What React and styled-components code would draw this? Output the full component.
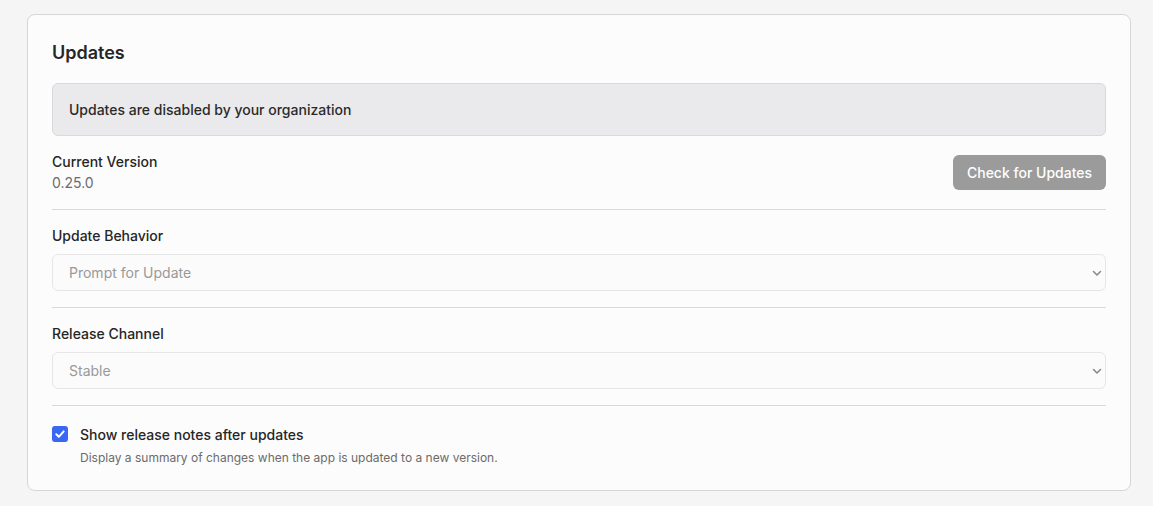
import React from "react";
import styled, { createGlobalStyle } from "styled-components";

const GlobalStyle = createGlobalStyle`
  html, body {
    margin: 0;
    padding: 0;
    background-color: #f5f5f5;
    font-family: Inter, "Noto Sans", "Liberation Sans", sans-serif;
    color: #262626;
  }
  * {
    box-sizing: border-box;
  }
`;

const Page = styled.div`
  padding: 14px 22px 15px 27px;
`;

const Card = styled.div`
  background-color: #fcfcfc;
  border: 1px solid #d6d6d6;
  border-radius: 8px;
  padding: 24px 24px 24px 24px;
`;

const Title = styled.h2`
  margin: 0 0 16px 0;
  font-size: 18px;
  line-height: 28px;
  font-weight: 600;
  color: #262626;
`;

const Notice = styled.div`
  background-color: #eaeaec;
  border: 1px solid #d9d9db;
  border-radius: 6px;
  padding: 16px 16px;
  font-size: 14px;
  line-height: 19px;
  font-weight: 500;
  color: #2a2a2a;
  margin-bottom: 16px;
`;

const Section = styled.div`
  padding: ${({ first }) => (first ? "0 0 16px 0" : "16px 0")};
  border-bottom: ${({ last }) => (last ? "none" : "1px solid #d9d9d9")};
`;

const VersionRow = styled.div`
  display: flex;
  align-items: center;
  justify-content: space-between;
`;

const Label = styled.div`
  font-size: 14px;
  line-height: 20px;
  font-weight: 500;
  color: #262626;
`;

const Value = styled.div`
  font-size: 14px;
  line-height: 21px;
  color: #6b6b6b;
`;

const Button = styled.button`
  width: 153px;
  height: 35px;
  border: none;
  border-radius: 6px;
  background-color: #9b9b9b;
  color: #ffffff;
  font-family: inherit;
  font-size: 14px;
  font-weight: 500;
  cursor: not-allowed;
`;

const SelectWrap = styled.div`
  position: relative;
  margin-top: 8px;
`;

const Select = styled.select`
  appearance: none;
  -webkit-appearance: none;
  width: 100%;
  height: 37px;
  padding: 0 40px 0 16px;
  border: 1px solid #e6e6e6;
  border-radius: 6px;
  background-color: #fbfbfb;
  font-family: inherit;
  font-size: 14px;
  color: #999999;
  opacity: 1;
`;

const Chevron = styled.svg`
  position: absolute;
  right: 3px;
  top: 50%;
  transform: translateY(-50%);
  pointer-events: none;
`;

const CheckRow = styled.div`
  display: flex;
  align-items: flex-start;
  gap: 12px;
  padding-top: 19px;
`;

const CheckBox = styled.div`
  width: 16px;
  height: 16px;
  margin-top: 1px;
  border-radius: 3px;
  background-color: #3a66f4;
  display: flex;
  align-items: center;
  justify-content: center;
  flex-shrink: 0;
`;

const CheckText = styled.div`
  display: flex;
  flex-direction: column;
  gap: 4px;
`;

const Hint = styled.div`
  font-size: 12px;
  line-height: 17px;
  color: #6b6b6b;
`;

function SelectField({ label, value, last }) {
  return (
    <Section last={last}>
      <Label>{label}</Label>
      <SelectWrap>
        <Select disabled value={value} onChange={() => {}}>
          <option value={value}>{value}</option>
        </Select>
        <Chevron width="12" height="12" viewBox="0 0 12 12" fill="none">
          <path d="M2.5 4.5L6 8L9.5 4.5" stroke="#8a8a8a" strokeWidth="1.6" strokeLinecap="round" strokeLinejoin="round" />
        </Chevron>
      </SelectWrap>
    </Section>
  );
}

export default function App() {
  return (
    <Page>
      <GlobalStyle />
      <Card>
        <Title>Updates</Title>
        <Notice>Updates are disabled by your organization</Notice>
        <Section first>
          <VersionRow>
            <div>
              <Label>Current Version</Label>
              <Value>0.25.0</Value>
            </div>
            <Button disabled>Check for Updates</Button>
          </VersionRow>
        </Section>
        <SelectField label="Update Behavior" value="Prompt for Update" />
        <SelectField label="Release Channel" value="Stable" />
        <CheckRow>
          <CheckBox>
            <svg width="12" height="12" viewBox="0 0 12 12" fill="none">
              <path d="M2.3 6.3L4.8 8.8L9.7 3.4" stroke="#ffffff" strokeWidth="2" strokeLinecap="round" strokeLinejoin="round" />
            </svg>
          </CheckBox>
          <CheckText>
            <Label>Show release notes after updates</Label>
            <Hint>Display a summary of changes when the app is updated to a new version.</Hint>
          </CheckText>
        </CheckRow>
      </Card>
    </Page>
  );
}
